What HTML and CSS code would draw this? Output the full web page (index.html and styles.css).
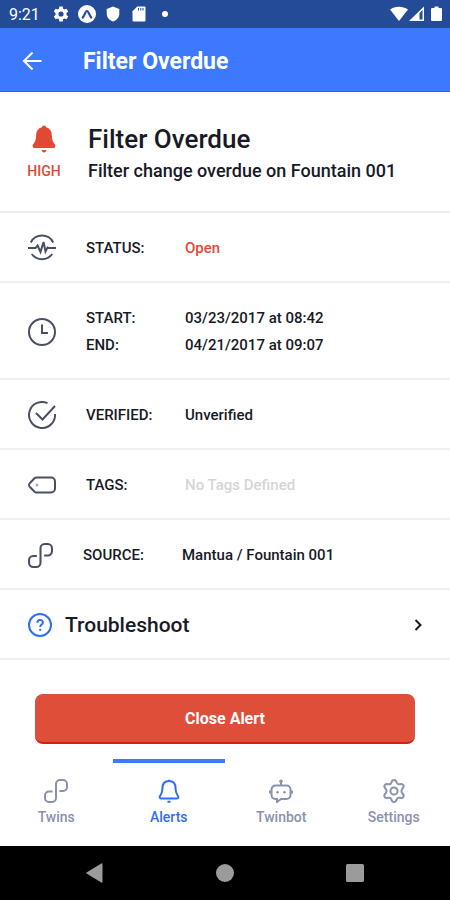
FILE: index.html
```html
<!DOCTYPE html>
<html lang="en">
<head>
<meta charset="utf-8">
<meta name="viewport" content="width=device-width, initial-scale=1">
<title>Filter Overdue</title>
<link rel="stylesheet" href="styles.css">
</head>
<body>
<svg class="defs" aria-hidden="true">
  <symbol id="twin" viewBox="0 0 24 24">
    <path d="M8.500 12.500H5a4 4 0 0 0-4 4V19a4 4 0 0 0 4 4h3a4 4 0 0 0 4-4V5a4 4 0 0 1 4-4h3a4 4 0 0 1 4 4v3a4 4 0 0 1-4 4h-3.500"/>
  </symbol>
</svg>

<div class="statusbar">
  <span class="clock">9:21</span>
  <svg class="status-icon" viewBox="0 0 18 18" aria-hidden="true">
    <path fill="#fff" fill-rule="evenodd" d="M7.300 1.500h3.400l.4 2.200 1.300.8 2.100-.8 1.700 2.900-1.700 1.400v2l1.700 1.400-1.700 2.900-2.100-.8-1.300.8-.4 2.200H7.300l-.4-2.200-1.300-.8-2.100.8-1.700-2.900L3.500 10V8L1.800 6.600l1.700-2.900 2.100.8 1.300-.8zM9 6.400a2.600 2.600 0 1 0 0 5.200 2.600 2.600 0 0 0 0-5.200z"/>
  </svg>
  <svg class="status-icon" viewBox="0 0 18 18" aria-hidden="true">
    <circle cx="9" cy="9" r="9" fill="#fff"/>
    <path d="M4.800 12.500C6.300 11.500 7.300 6 9 6s2.700 5.500 4.200 6.500" fill="none" stroke="#234b98" stroke-width="2.200" stroke-linecap="round"/>
  </svg>
  <svg class="status-icon" viewBox="0 0 18 18" aria-hidden="true">
    <path fill="#fff" d="M9 1.500 15.300 4v4.500c0 4-2.600 6.600-6.300 8-3.700-1.400-6.300-4-6.300-8V4z"/>
  </svg>
  <svg class="status-icon" viewBox="0 0 18 18" aria-hidden="true">
    <path fill="#fff" d="M7.200 1.500h7.300a1 1 0 0 1 1 1v13a1 1 0 0 1-1 1h-11a1 1 0 0 1-1-1V6.200z"/>
    <path stroke="#234b98" stroke-width="1" d="M8.500 3v2.500M10.800 3v2.500M13 3v2.500"/>
  </svg>
  <svg class="status-icon" viewBox="0 0 18 18" aria-hidden="true">
    <circle cx="9" cy="9" r="3" fill="#fff"/>
  </svg>
  <svg class="signals" viewBox="0 0 54 18" aria-hidden="true">
    <path fill="#fff" d="M0 4.500C5 .8 12.500.8 18 4.500L9 16z"/>
    <path fill="#fff" fill-rule="evenodd" d="M34 1.500V16H19zM32.500 5v9.500h-3V8z"/>
    <path fill="#fff" d="M42 3h2.500V1.500h4V3H51a1 1 0 0 1 1 1v11a1 1 0 0 1-1 1h-9a1 1 0 0 1-1-1V4a1 1 0 0 1 1-1z"/>
  </svg>
</div>

<header class="appbar">
  <button class="back" type="button" aria-label="Back">
    <svg viewBox="0 0 20 20" aria-hidden="true"><path d="M19 10H2M10 1.500 1.500 10l8.500 8.500"/></svg>
  </button>
  <h1 class="appbar-title">Filter Overdue</h1>
</header>

<main class="content">
  <section class="summary">
    <div class="severity">
      <svg class="bell" viewBox="0 0 24 28" aria-hidden="true">
        <path d="M12 .5c1.300 0 1.800.8 2 1.700 4 1 5.700 4 5.900 8.300.2 5 1.100 6.500 3 8.700.9 1.200.5 3.800-1.300 3.800H2.400C.6 23 .2 20.400 1.100 19.200c1.900-2.200 2.800-3.700 3-8.700C4.300 6.200 6 3.200 10 2.200c.2-.9.700-1.700 2-1.700zM9.500 25h5c-.3 1.600-1.200 2.500-2.500 2.500S9.800 26.600 9.500 25z"/>
      </svg>
      <span class="severity-label">HIGH</span>
    </div>
    <div>
      <h2 class="summary-title">Filter Overdue</h2>
      <p class="summary-text">Filter change overdue on Fountain 001</p>
    </div>
  </section>

  <section class="row">
    <svg class="row-icon" viewBox="0 0 28 28" aria-hidden="true">
      <path d="M2.800 8.500a12.500 12.500 0 0 1 22.400 0M3.800 20a12.500 12.500 0 0 0 20.400 0M0 14h7.500l2-2.500 3 6.500 3-10 2 9.500 2-4 1 .5H28"/>
    </svg>
    <dl class="fields">
      <dt>STATUS:</dt><dd class="open">Open</dd>
    </dl>
  </section>

  <section class="row row-tall">
    <svg class="row-icon" viewBox="0 0 28 28" aria-hidden="true">
      <circle cx="14" cy="14" r="13"/><path d="M14 6.500V15h6"/>
    </svg>
    <dl class="fields">
      <dt>START:</dt><dd>03/23/2017 at 08:42</dd>
      <dt>END:</dt><dd>04/21/2017 at 09:07</dd>
    </dl>
  </section>

  <section class="row">
    <svg class="row-icon" viewBox="0 0 28 28" aria-hidden="true">
      <path d="M19.500 2.200A13 13 0 1 0 27 13M8 12l6.500 6.500L27 5"/>
    </svg>
    <dl class="fields">
      <dt>VERIFIED:</dt><dd>Unverified</dd>
    </dl>
  </section>

  <section class="row">
    <svg class="row-icon" viewBox="0 0 28 28" aria-hidden="true">
      <path d="M8.500 6.500H23a4 4 0 0 1 4 4v7a4 4 0 0 1-4 4H8.500a3 3 0 0 1-2-.8L2 16a2.500 2.500 0 0 1 0-4l4.500-4.700a3 3 0 0 1 2-.8z"/>
      <circle class="tag-hole" cx="9" cy="14" r="1.500"/>
    </svg>
    <dl class="fields">
      <dt>TAGS:</dt><dd class="empty">No Tags Defined</dd>
    </dl>
  </section>

  <section class="row">
    <svg class="row-icon row-icon-small" aria-hidden="true"><use href="#twin"/></svg>
    <dl class="fields">
      <dt>SOURCE:</dt><dd>Mantua / Fountain 001</dd>
    </dl>
  </section>

  <button class="row troubleshoot" type="button">
    <svg class="help" viewBox="0 0 24 24" aria-hidden="true">
      <circle cx="12" cy="12" r="11"/>
      <path d="M9.300 9.700c0-3.700 5.600-3.600 5.600-.3 0 2.100-2.700 2.300-2.700 4.500M12.200 15.700v2"/>
    </svg>
    <span class="troubleshoot-label">Troubleshoot</span>
    <svg class="chevron" viewBox="0 0 8 12" aria-hidden="true"><path d="M1.500 1 6.500 6l-5 5"/></svg>
  </button>

  <div class="action">
    <button class="close-alert" type="button">Close Alert</button>
  </div>
</main>

<nav class="tabs" aria-label="Main">
  <a class="tab" href="#twins">
    <svg class="tab-icon" aria-hidden="true"><use href="#twin"/></svg>
    <span>Twins</span>
  </a>
  <a class="tab active" href="#alerts" aria-current="page">
    <svg class="tab-icon" viewBox="0 0 24 24" aria-hidden="true">
      <path d="M12 2c-4.500 0-6.500 3-6.500 7 0 5-1.500 6.500-2.500 8-.8 1.300-.3 2.500 1 2.500h16c1.300 0 1.800-1.200 1-2.500-1-1.500-2.500-3-2.500-8 0-4-2-7-6.500-7zM12 .8V2M10.500 22.700h3"/>
    </svg>
    <span>Alerts</span>
  </a>
  <a class="tab" href="#twinbot">
    <svg class="tab-icon" viewBox="0 0 24 24" aria-hidden="true">
      <path d="M6.500 6.500h11a4 4 0 0 1 4 4V16a4 4 0 0 1-4 4H12l-4 3v-3H6.500a4 4 0 0 1-4-4v-5.500a4 4 0 0 1 4-4zM12 6V3M1 11.500v3M23 11.500v3"/>
      <circle class="dot" cx="12" cy="2.200" r="1.800"/>
      <circle class="dot" cx="8.500" cy="13.300" r="1.300"/>
      <circle class="dot" cx="15.500" cy="13.300" r="1.300"/>
    </svg>
    <span>Twinbot</span>
  </a>
  <a class="tab" href="#settings">
    <svg class="tab-icon" viewBox="0 0 24 24" aria-hidden="true">
      <path d="M12 1c1.800 0 2.100.8 2.500 2.300.4 1.500 1.800 2.300 3.300 1.900 1.500-.5 2.600-.7 3.500.9.900 1.500.4 2.200-.8 3.300-1.400 1.300-1.400 3.900 0 5.200 1.200 1.100 1.700 1.800.8 3.300-.9 1.600-2 1.400-3.500.9-1.500-.4-2.900.4-3.300 1.900-.4 1.500-.7 2.300-2.500 2.300s-2.100-.8-2.500-2.300c-.4-1.500-1.800-2.300-3.300-1.900-1.500.5-2.600.7-3.500-.9-.9-1.500-.4-2.200.8-3.300 1.400-1.300 1.400-3.900 0-5.200-1.200-1.100-1.700-1.800-.8-3.300.9-1.600 2-1.400 3.500-.9 1.500.4 2.900-.4 3.300-1.900C9.900 1.800 10.200 1 12 1z"/>
      <circle cx="12" cy="12" r="3.600"/>
    </svg>
    <span>Settings</span>
  </a>
</nav>

<div class="systembar">
  <button class="system-button" type="button" aria-label="System back">
    <svg viewBox="0 0 20 20" aria-hidden="true"><path d="M17.500 1v18a.8.800 0 0 1-1.200.6L1.500 10.600a.8.800 0 0 1 0-1.200L16.300.4a.8.800 0 0 1 1.200.6z"/></svg>
  </button>
  <button class="system-button" type="button" aria-label="Home">
    <svg viewBox="0 0 20 20" aria-hidden="true"><circle cx="10" cy="10" r="9"/></svg>
  </button>
  <button class="system-button" type="button" aria-label="Recent apps">
    <svg viewBox="0 0 20 20" aria-hidden="true"><rect x="1" y="1" width="18" height="18" rx="1.500"/></svg>
  </button>
</div>
</body>
</html>
```

FILE: styles.css
```css
* {
  box-sizing: border-box;
}

body {
  margin: 0;
  min-height: 100vh;
  display: flex;
  flex-direction: column;
  background: #fff;
  color: #181a26;
  font-family: Roboto, "Liberation Sans", sans-serif;
}

h1, h2, p, dl, dd {
  margin: 0;
}

button {
  border: 0;
  padding: 0;
  background: none;
  color: inherit;
  font-family: inherit;
}

svg {
  flex: none;
}

.defs {
  display: none;
}

.statusbar {
  display: flex;
  align-items: center;
  gap: 8px;
  height: 28px;
  padding: 0 6px 0 9px;
  background: #234b98;
  color: #fff;
}

.clock {
  margin-right: 4px;
  font-size: 16px;
}

.status-icon {
  width: 18px;
  height: 18px;
}

.signals {
  width: 54px;
  height: 18px;
  margin-left: auto;
}

.appbar {
  display: flex;
  align-items: center;
  height: 64px;
  padding: 3px 22px 0;
  gap: 40px;
  background: #3c79fe;
  border-bottom: 1px solid #1769f2;
  color: #fff;
}

.back {
  display: flex;
}

.back svg {
  width: 21px;
  height: 20px;
  fill: none;
  stroke: #fff;
  stroke-width: 2;
}

.appbar-title {
  font-size: 23px;
  font-weight: 700;
}

.summary {
  display: flex;
  align-items: center;
  height: 121px;
  padding: 2px 28px 0;
  gap: 28px;
  border-bottom: 2px solid #ececec;
}

.severity {
  display: flex;
  flex-direction: column;
  align-items: center;
  width: 32px;
  gap: 8px;
  color: #e04a35;
}

.bell {
  width: 24px;
  height: 28px;
  fill: #e04a35;
}

.severity-label {
  font-size: 14px;
  line-height: 20px;
  font-weight: 500;
}

.summary-title {
  font-size: 26px;
  line-height: 36px;
  font-weight: 500;
}

.summary-text {
  font-size: 18px;
  line-height: 28px;
  font-weight: 500;
}

.row {
  display: flex;
  align-items: center;
  width: 100%;
  height: 70px;
  padding: 2px 28px 0;
  border-bottom: 2px solid #f0f0f0;
}

.row-tall {
  height: 97px;
}

.row-icon {
  width: 28px;
  height: 28px;
  margin-right: 30px;
  fill: none;
  stroke: #4b4f63;
  stroke-width: 2;
}

.row-icon-small {
  width: 25px;
  height: 25px;
}

.dot {
  fill: currentColor;
  stroke: none;
}

.tag-hole {
  fill: #a9abb8;
  stroke: none;
}

.fields {
  display: grid;
  grid-template-columns: 99px 1fr;
  font-size: 15px;
  line-height: 27px;
  font-weight: 500;
}

.open {
  color: #e04a35;
}

.empty {
  color: #d5d5d8;
}

.troubleshoot {
  gap: 13px;
  text-align: left;
}

.help {
  width: 24px;
  height: 24px;
  fill: none;
  stroke: #2f6df6;
  stroke-width: 2;
}

.troubleshoot-label {
  flex: 1;
  font-size: 21px;
  font-weight: 500;
}

.chevron {
  width: 8px;
  height: 12px;
  fill: none;
  stroke: #181a26;
  stroke-width: 2;
}

.action {
  padding: 34px 35px 15px;
}

.close-alert {
  display: block;
  width: 100%;
  height: 50px;
  border-bottom: 2px solid #d81f12;
  border-radius: 8px;
  background: #df4e39;
  color: #fff;
  font-size: 16px;
  font-weight: 700;
}

.tabs {
  display: grid;
  grid-template-columns: repeat(4, 1fr);
  margin-top: auto;
  height: 87px;
}

.tab {
  display: flex;
  flex-direction: column;
  align-items: center;
  gap: 4px;
  padding-top: 16px;
  border-top: 4px solid transparent;
  color: #8a92ae;
  font-size: 14px;
  line-height: 20px;
  font-weight: 500;
  text-decoration: none;
}

.tab.active {
  border-top-color: #3c79fe;
  color: #2f6df6;
}

.tab-icon {
  width: 24px;
  height: 24px;
  fill: none;
  stroke: currentColor;
  stroke-width: 2;
}

.systembar {
  display: flex;
  align-items: center;
  justify-content: center;
  gap: 110px;
  height: 54px;
  background: #000;
}

.system-button {
  display: flex;
}

.system-button svg {
  width: 20px;
  height: 20px;
  fill: #9b9b9b;
}
```
